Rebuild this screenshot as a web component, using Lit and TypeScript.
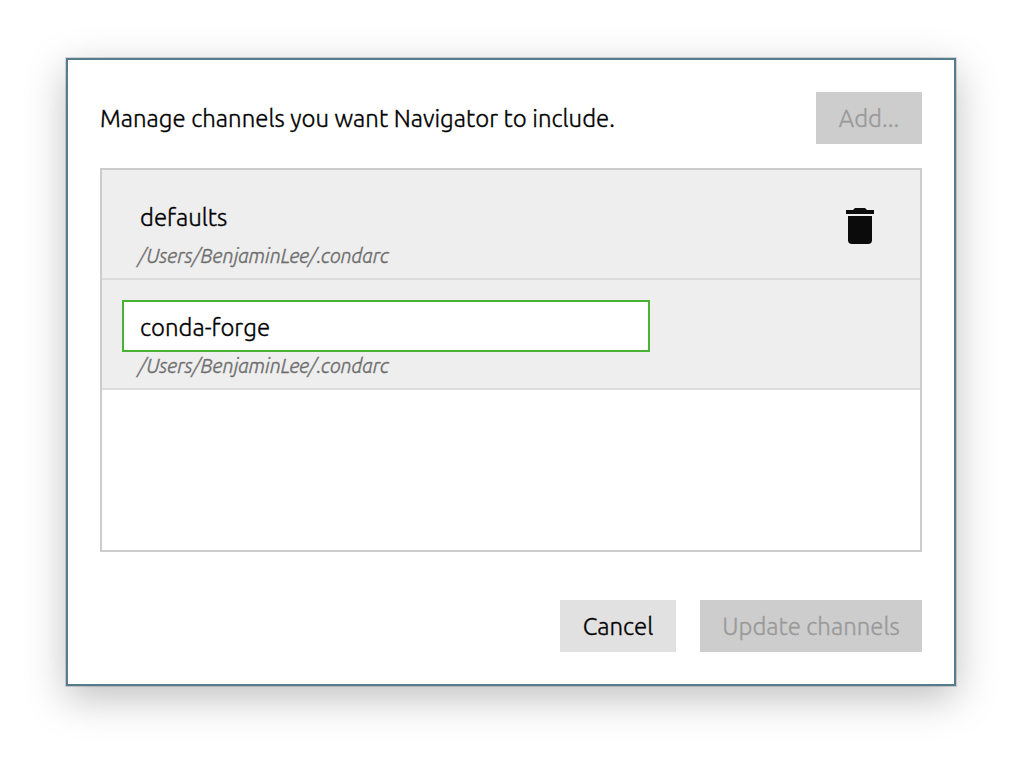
import { LitElement, html, css } from "lit";
import { customElement, property } from "lit/decorators.js";

@customElement("channel-row")
class ChannelRow extends LitElement {
  @property() name = "";
  @property() source = "";
  @property({ type: Boolean }) editing = false;

  static styles = css`
    :host {
      display: block;
      box-sizing: border-box;
      height: 110px;
      padding: 20px 46px 0 20px;
      background: #eeeeee;
      border-bottom: 2px solid #dcdcdc;
    }
    .row { display: flex; justify-content: space-between; }
    .info { width: 528px; }
    .name {
      box-sizing: border-box;
      height: 52px;
      padding-left: 16px;
      border: 2px solid transparent;
      font-size: 24px;
      line-height: 51px;
      color: #000;
      white-space: nowrap;
    }
    .name.editing { background: #fff; border-color: #49b235; }
    .path {
      padding-left: 16.5px;
      font-size: 20px;
      line-height: 28px;
      font-style: italic;
      color: #6d6d6d;
      letter-spacing: -0.08px;
      white-space: nowrap;
    }
    .trash { display: block; margin-top: 18px; }
  `;

  render() {
    return html`<div class="row">
      <div class="info">
        <div class="name ${this.editing ? "editing" : ""}">${this.name}</div>
        <div class="path">${this.source}</div>
      </div>
      ${this.editing
        ? null
        : html`<svg class="trash" width="28" height="36" viewBox="0 0 28 36" fill="#0b0b0b">
            <path d="M0 2H7L9 0H19L21 2H28V6H0Z" />
            <path d="M2 8H26V32Q26 36 22 36H6Q2 36 2 32Z" />
          </svg>`}
    </div>`;
  }
}

@customElement("app-root")
class AppRoot extends LitElement {
  static styles = css`
    :host {
      display: block;
      box-sizing: border-box;
      width: 1022px;
      height: 760px;
      padding: 58px 66px 74px;
      overflow: hidden;
      background: #fff;
      font-family: Ubuntu, "Noto Sans", sans-serif;
      font-size: 24px;
      font-weight: 300;
      -webkit-text-stroke: 0.35px currentColor;
    }
    .dialog {
      box-sizing: border-box;
      width: 890px;
      height: 628px;
      padding: 32px;
      display: flex;
      flex-direction: column;
      background: #fff;
      border: 2px solid #557b8d;
      box-shadow: 0 0 0 1px rgba(0, 0, 0, 0.14), 0 12px 38px rgba(0, 0, 0, 0.25);
    }
    .head { display: flex; justify-content: space-between; height: 52px; }
    .title { line-height: 53px; white-space: nowrap; color: #000; letter-spacing: 0.02px; }
    .list {
      box-sizing: border-box;
      height: 384px;
      margin-top: 24px;
      border: 2px solid #cccccc;
    }
    .foot { display: flex; justify-content: flex-end; gap: 24px; margin-top: 48px; }
    .btn {
      height: 52px;
      padding: 0;
      border: 0;
      border-radius: 0;
      font: inherit;
      line-height: 51px;
      text-align: center;
      white-space: nowrap;
      background: #cdcdcd;
      color: #9a9a9a;
    }
    .add { width: 106px; }
    .cancel { width: 116px; background: #e1e1e1; color: #000; }
    .update { width: 222px; }
  `;

  render() {
    return html`<div class="dialog">
      <div class="head">
        <div class="title">Manage channels you want Navigator to include.</div>
        <button class="btn add" disabled>Add...</button>
      </div>
      <div class="list">
        <channel-row name="defaults" source="/Users/BenjaminLee/.condarc"></channel-row>
        <channel-row name="conda-forge" source="/Users/BenjaminLee/.condarc" editing></channel-row>
      </div>
      <div class="foot">
        <button class="btn cancel">Cancel</button>
        <button class="btn update" disabled>Update channels</button>
      </div>
    </div>`;
  }
}
